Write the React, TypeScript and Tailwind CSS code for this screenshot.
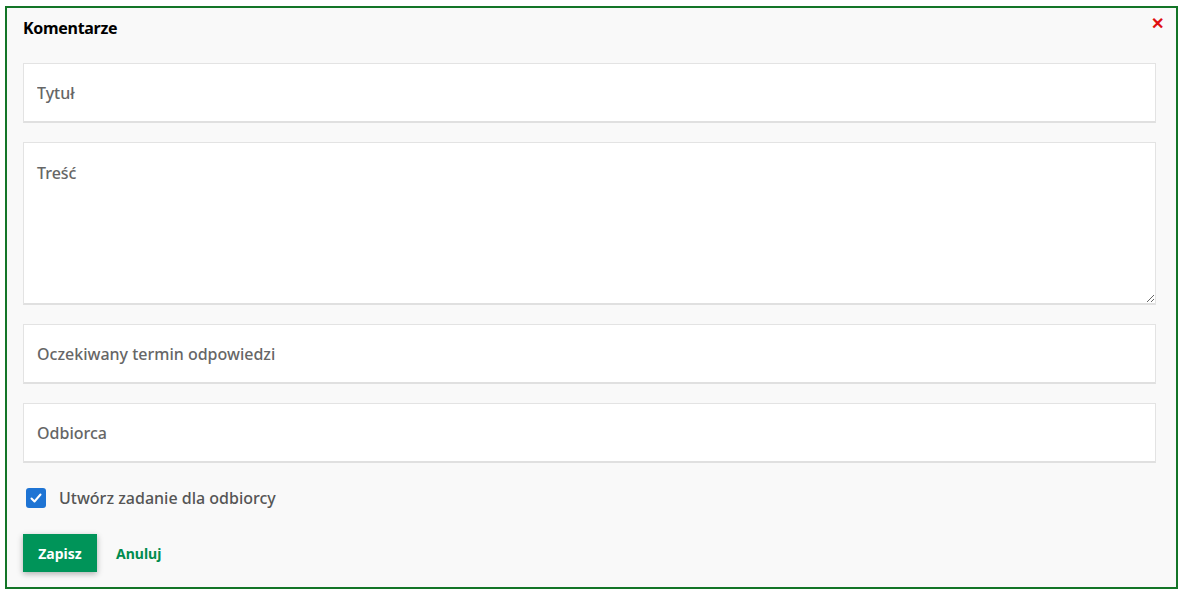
import { useState } from "react";

const fieldCls =
  "w-full bg-white border border-[#e3e3e3] border-b-2 border-b-[#e0e0e0] px-[13px] text-[16px] font-medium text-[#555] placeholder:text-[#666] outline-none";

export default function App() {
  const [checked, setChecked] = useState(true);

  return (
    <div className="min-h-screen bg-white pl-[5px] pt-[6px] font-['Noto_Sans',sans-serif]">
      <div className="w-[1173px] h-[583px] border-2 border-[#137527] bg-[#f9f9f9] pl-4 pr-[20px] flex flex-col relative">
        {/* header */}
        <div className="flex justify-between pt-[9px] h-[55px] items-start">
          <h2 className="text-[16px] font-bold text-black leading-[22px] tracking-[-0.3px]">Komentarze</h2>
          <button className="absolute right-[12px] top-[7px] text-[#e01010] text-[16px] leading-none font-bold">
            ✕
          </button>
        </div>

        <div className="flex flex-col gap-[19px]">
          <input className={`${fieldCls} h-[60px]`} placeholder="Tytuł" />
          <textarea className={`${fieldCls} h-[163px] pt-[18px] resize-y`} placeholder="Treść" />
          <input className={`${fieldCls} h-[60px]`} placeholder="Oczekiwany termin odpowiedzi" />
          <input className={`${fieldCls} h-[60px]`} placeholder="Odbiorca" />
        </div>

        {/* checkbox */}
        <label className="flex items-center gap-[13px] mt-[24px] pl-[3px] cursor-pointer">
          <span
            onClick={() => setChecked(!checked)}
            className={`w-[20px] h-[20px] rounded-[3px] flex items-center justify-center ${
              checked ? "bg-[#1e74d4]" : "bg-white border border-[#999]"
            }`}
          >
            {checked && (
              <svg width="14" height="14" viewBox="0 0 14 14" fill="none">
                <path d="M2.5 7.5l3 3 6-7" stroke="white" strokeWidth="2" strokeLinecap="round" strokeLinejoin="round" />
              </svg>
            )}
          </span>
          <span className="text-[16px] font-medium text-[#555] leading-[22px]">Utwórz zadanie dla odbiorcy</span>
        </label>

        {/* actions */}
        <div className="flex items-center gap-[19px] mt-[25px]">
          <button className="w-[74px] h-[38px] bg-[#009459] text-white text-[14px] font-bold shadow-[0_2px_6px_rgba(0,0,0,0.3)]">
            Zapisz
          </button>
          <button className="text-[14px] font-bold text-[#008c4f]">Anuluj</button>
        </div>
      </div>
    </div>
  );
}
